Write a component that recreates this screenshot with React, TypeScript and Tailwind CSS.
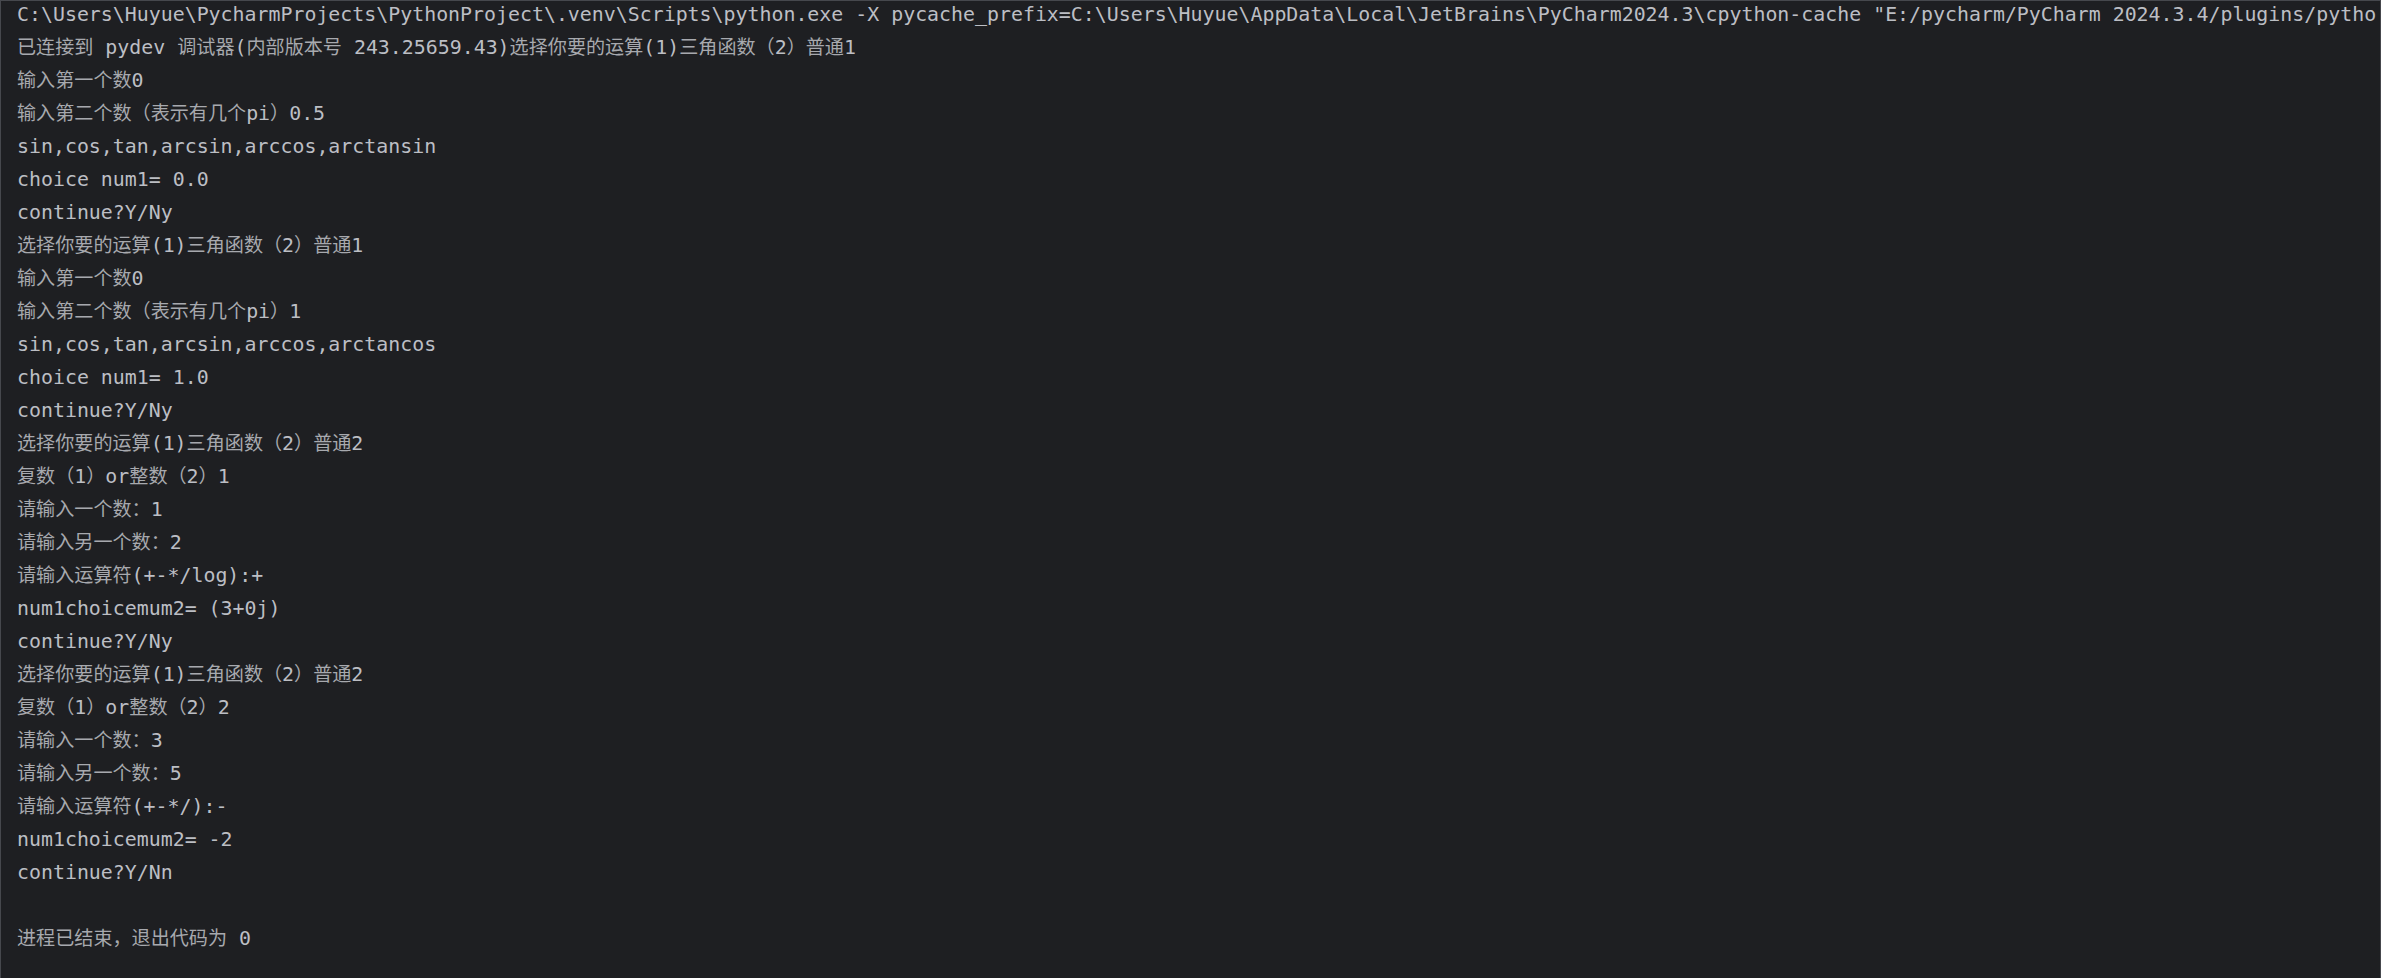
import React from "react";

const lines: string[] = [
  String.raw`C:\Users\Huyue\PycharmProjects\PythonProject\.venv\Scripts\python.exe -X pycache_prefix=C:\Users\Huyue\AppData\Local\JetBrains\PyCharm2024.3\cpython-cache "E:/pycharm/PyCharm 2024.3.4/plugins/pytho`,
  "已连接到 pydev 调试器(内部版本号 243.25659.43)选择你要的运算(1)三角函数（2）普通1",
  "输入第一个数0",
  "输入第二个数（表示有几个pi）0.5",
  "sin,cos,tan,arcsin,arccos,arctansin",
  "choice num1= 0.0",
  "continue?Y/Ny",
  "选择你要的运算(1)三角函数（2）普通1",
  "输入第一个数0",
  "输入第二个数（表示有几个pi）1",
  "sin,cos,tan,arcsin,arccos,arctancos",
  "choice num1= 1.0",
  "continue?Y/Ny",
  "选择你要的运算(1)三角函数（2）普通2",
  "复数（1）or整数（2）1",
  "请输入一个数：1",
  "请输入另一个数：2",
  "请输入运算符(+-*/log):+",
  "num1choicemum2= (3+0j)",
  "continue?Y/Ny",
  "选择你要的运算(1)三角函数（2）普通2",
  "复数（1）or整数（2）2",
  "请输入一个数：3",
  "请输入另一个数：5",
  "请输入运算符(+-*/):-",
  "num1choicemum2= -2",
  "continue?Y/Nn",
  "",
  "进程已结束，退出代码为 0",
];

const cjk = /[\u3000-\u303f\u3400-\u9fff\uff00-\uffef]/;

// split a line into runs of CJK / non-CJK so each gets its own font size
function splitRuns(text: string) {
  const runs: { text: string; wide: boolean }[] = [];
  for (const ch of text) {
    const wide = cjk.test(ch);
    const last = runs[runs.length - 1];
    if (last && last.wide === wide) last.text += ch;
    else runs.push({ text: ch, wide });
  }
  return runs;
}

function ConsoleLine({ text }: { text: string }) {
  return (
    <div className="h-[33px] leading-[33px] whitespace-pre overflow-hidden">
      {splitRuns(text).map((run, i) =>
        run.wide ? (
          <span
            key={i}
            className="text-[19.1px] leading-none text-[#a7a9ae] font-['Noto_Sans_CJK_SC',sans-serif]"
          >
            {run.text}
          </span>
        ) : (
          <span key={i}>{run.text}</span>
        )
      )}
    </div>
  );
}

export default function App() {
  return (
    <div className="h-screen w-full overflow-hidden bg-[#1e1f22] border-t border-l border-r border-[#46484d]">
      <div className="-mt-[3px] pl-4 font-['DejaVu_Sans_Mono','Noto_Sans_CJK_SC',monospace] text-[19.9px] text-[#bcbec4]">
        {lines.map((line, i) => (
          <ConsoleLine key={i} text={line} />
        ))}
      </div>
    </div>
  );
}
